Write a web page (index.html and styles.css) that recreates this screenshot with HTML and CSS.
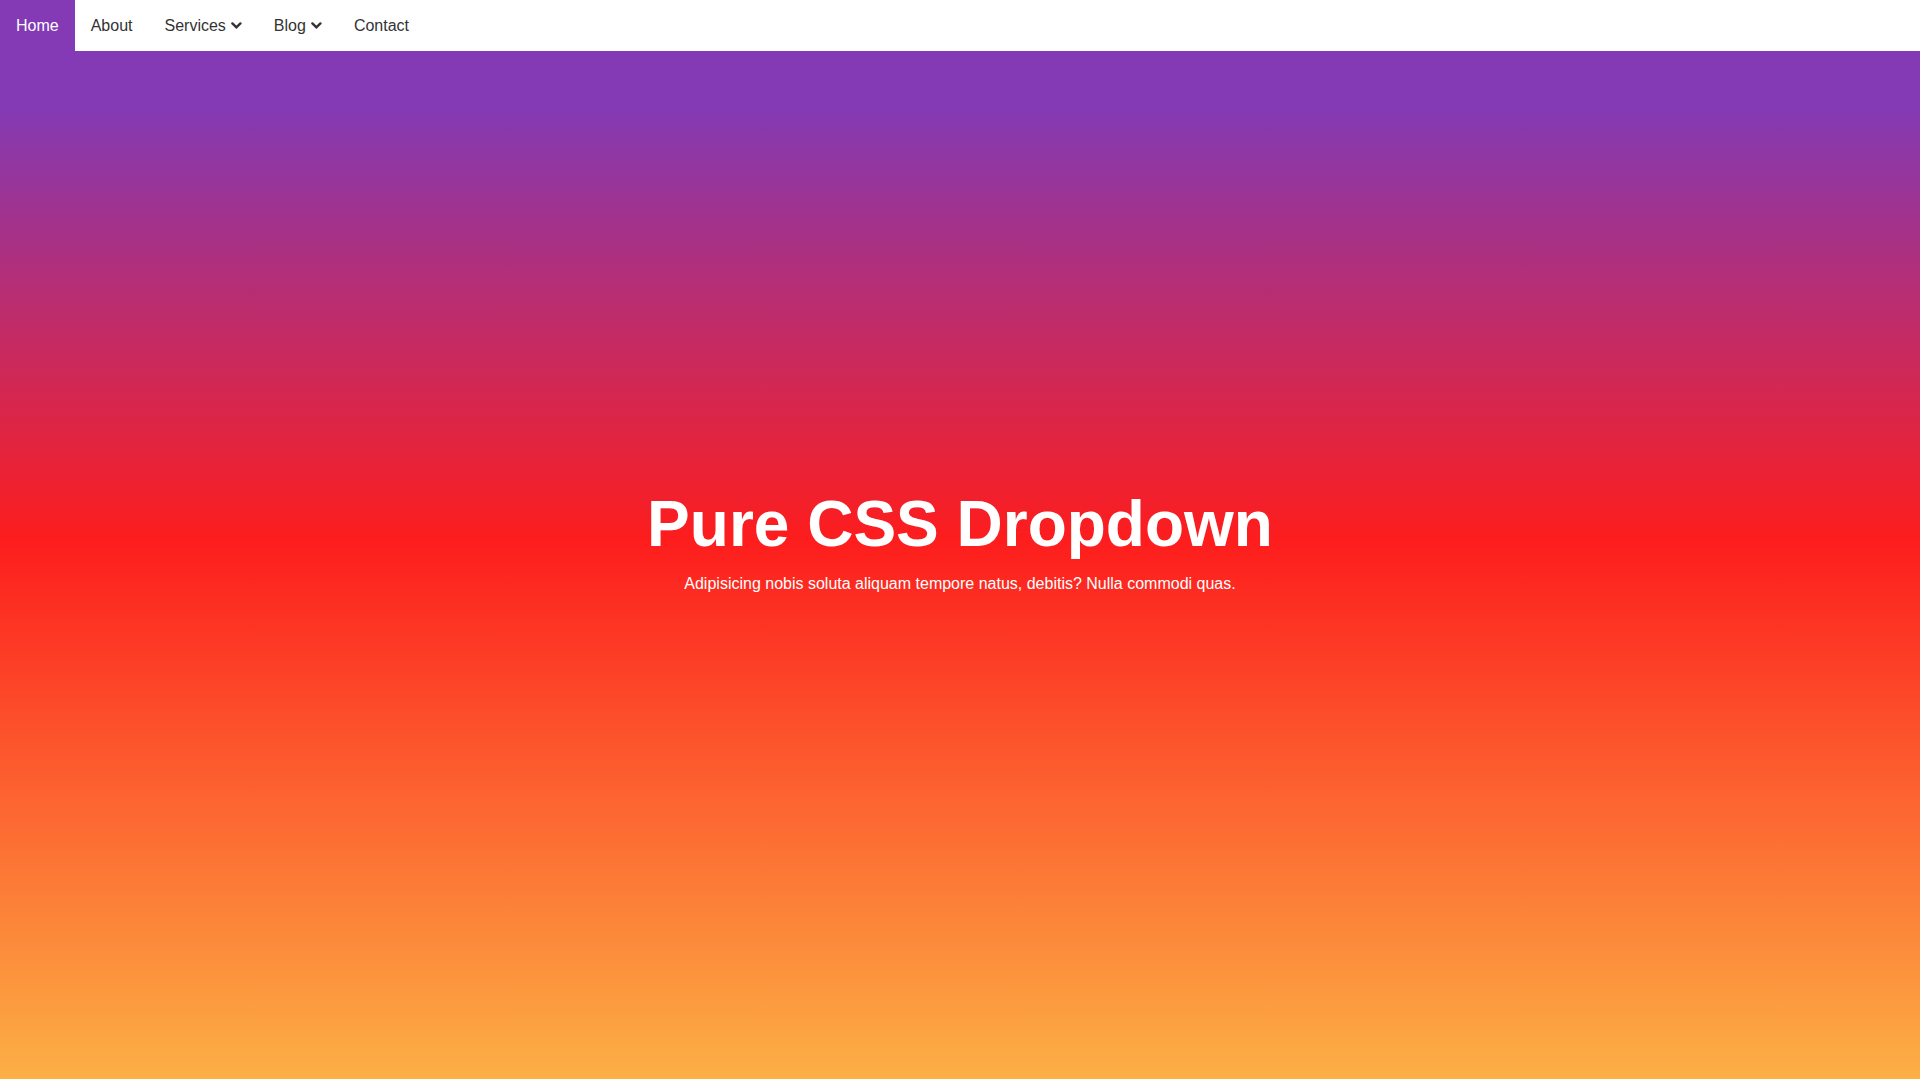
FILE: index.html
```html
<!DOCTYPE html>
<html lang="en">
<head>
<meta charset="utf-8">
<title>Pure CSS Dropdown</title>
<link rel="stylesheet" href="styles.css">
</head>
<body>
<nav class="nav">
  <ul class="menu">
    <li><a class="link active" href="#">Home</a></li>
    <li><a class="link" href="#">About</a></li>
    <li><a class="link" href="#">Services<svg class="chev" viewBox="0 0 11 7"><polyline points="1.4,1.4 5.4,5.3 9.4,1.4"/></svg></a></li>
    <li><a class="link" href="#">Blog<svg class="chev" viewBox="0 0 11 7"><polyline points="1.4,1.4 5.4,5.3 9.4,1.4"/></svg></a></li>
    <li><a class="link" href="#">Contact</a></li>
  </ul>
</nav>
<main class="hero">
  <h1 class="title">Pure CSS Dropdown</h1>
  <p class="lead">Adipisicing nobis soluta aliquam tempore natus, debitis? Nulla commodi quas.</p>
</main>
</body>
</html>
```

FILE: styles.css
```css
* { box-sizing: border-box; }
html, body { margin: 0; padding: 0; }
body {
  font-family: "Liberation Sans", Arial, sans-serif;
  min-height: 100vh;
  background: linear-gradient(to bottom, #833ab4 10%, #fd1d1d 50%, #fcb045 100%);
  color: #fff;
}
.nav {
  position: fixed;
  top: 0; left: 0; right: 0;
  background: #fff;
  height: 51px;
}
.menu {
  list-style: none;
  margin: 0; padding: 0;
  display: flex;
  height: 100%;
}
.link {
  display: flex;
  align-items: center;
  gap: 5px;
  height: 51px;
  padding: 0 16px;
  color: #333;
  text-decoration: none;
  font-size: 16px;
}
.link.active {
  background: #833ab4;
  color: #fff;
}
.chev {
  width: 11px;
  height: 7px;
  fill: none;
  stroke: #333;
  stroke-width: 2.4;
  stroke-linecap: round;
  stroke-linejoin: miter;
}
.hero {
  height: 100vh;
  display: flex;
  flex-direction: column;
  align-items: center;
  justify-content: center;
  text-align: center;
}
.title {
  font-size: 64px;
  font-weight: 700;
  margin: 0;
  line-height: 1.2;
}
.lead {
  font-size: 16px;
  margin: 13px 0 0;
}
```
